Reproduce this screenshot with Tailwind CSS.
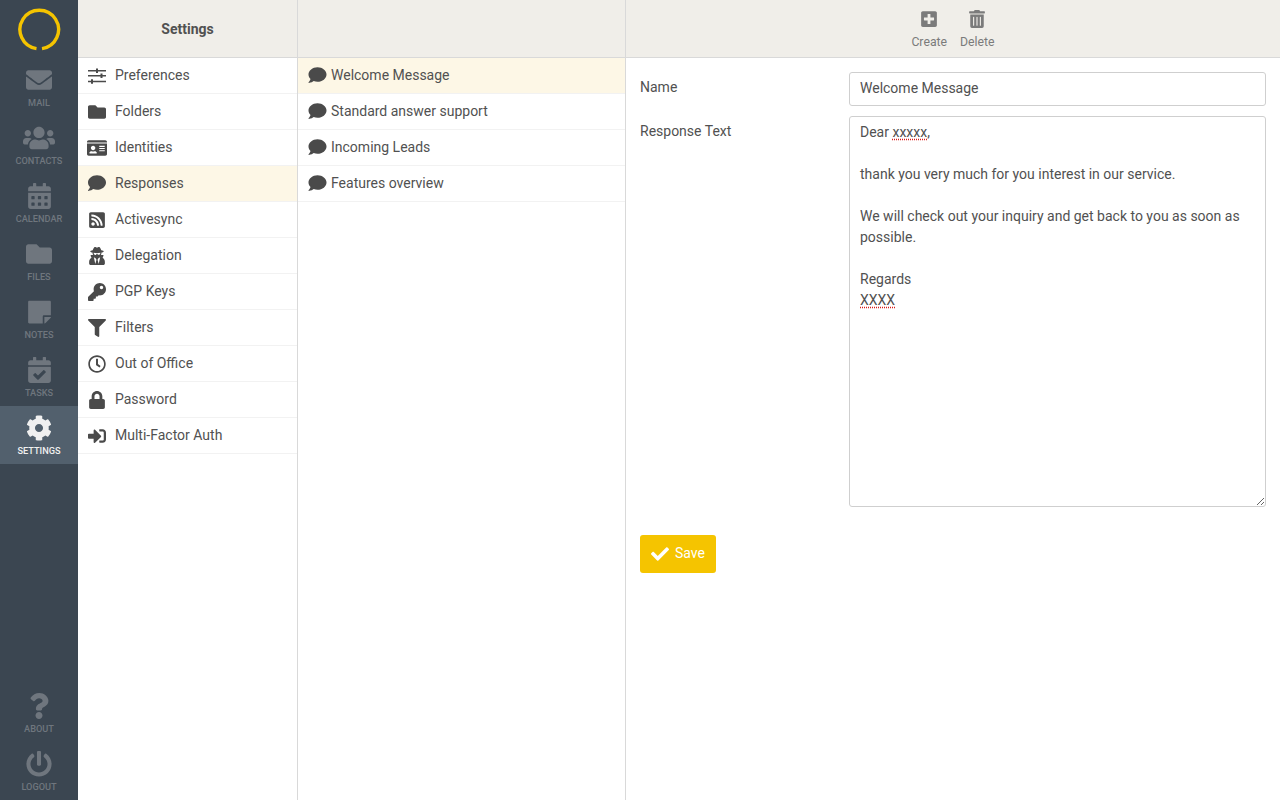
<!DOCTYPE html>
<html lang="en">
<head>
<meta charset="utf-8">
<title>Settings</title>
<script src="https://cdn.jsdelivr.net/npm/@tailwindcss/browser@4"></script>
</head>
<body class="m-0 overflow-hidden bg-white font-['Roboto',sans-serif] text-[14px] text-[#515151]">
<div class="flex h-[800px] w-[1280px]">

  <nav class="flex h-full w-[78px] shrink-0 flex-col bg-[#3b4651] text-[9.2px] font-medium uppercase text-[#6f767e]">
    <div class="flex h-[58px] items-start justify-center pt-[8px]">
      <svg class="h-[44px] w-[44px]" viewBox="0 0 44 44" fill="none"><path d="M19.5 40.6A19.3 19.3 0 1 1 25 40.6" stroke="#f5c400" stroke-width="3.4"/></svg>
    </div>
    <a class="flex h-[58px] flex-col items-center pt-[9px]"><svg class="h-[26px] w-[26px] fill-current" viewBox="0 0 512 512"><path d="M502.3 190.8c3.9-3.1 9.7-.2 9.7 4.7V400c0 26.5-21.5 48-48 48H48c-26.5 0-48-21.5-48-48V195.6c0-5 5.7-7.8 9.7-4.7 22.4 17.4 52.1 39.5 154.1 113.6 21.1 15.4 56.7 47.8 92.2 47.6 35.7.3 72-32.8 92.3-47.6 102-74.1 131.6-96.3 154-113.7zM256 320c23.2.4 56.6-29.2 73.4-41.4 132.7-96.3 142.8-104.7 173.4-128.7 5.8-4.5 9.2-11.5 9.2-18.9v-19c0-26.5-21.5-48-48-48H48C21.5 64 0 85.5 0 112v19c0 7.4 3.4 14.3 9.2 18.9 30.6 23.9 40.7 32.4 173.4 128.7 16.8 12.2 50.2 41.8 73.4 41.4z"/></svg><span class="mt-[4px] leading-[12px]">Mail</span></a>
    <a class="flex h-[58px] flex-col items-center pt-[9px]"><svg class="h-[26px] w-[32px] fill-current" viewBox="0 0 640 512"><path d="M96 224c35.3 0 64-28.7 64-64s-28.7-64-64-64-64 28.7-64 64 28.7 64 64 64zm448 0c35.3 0 64-28.7 64-64s-28.7-64-64-64-64 28.7-64 64 28.7 64 64 64zm32 32h-64c-17.6 0-33.5 7.1-45.1 18.6 40.3 22.1 68.9 62 75.1 109.4h66c17.7 0 32-14.3 32-32v-32c0-35.3-28.7-64-64-64zm-256 0c61.9 0 112-50.1 112-112S381.9 32 320 32 208 82.1 208 144s50.1 112 112 112zm76.8 32h-8.3c-20.8 10-43.9 16-68.5 16s-47.6-6-68.5-16h-8.3C179.6 288 128 339.6 128 403.2V432c0 26.5 21.5 48 48 48h288c26.5 0 48-21.5 48-48v-28.8c0-63.6-51.6-115.2-115.2-115.2zm-223.7-13.4C161.5 263.1 145.6 256 128 256H64c-35.3 0-64 28.7-64 64v32c0 17.7 14.3 32 32 32h65.9c6.3-47.4 34.9-87.3 75.2-109.4z"/></svg><span class="mt-[4px] leading-[12px]">Contacts</span></a>
    <a class="flex h-[58px] flex-col items-center pt-[9px]"><svg class="h-[26px] w-[23px] fill-current" viewBox="0 0 448 512"><path d="M0 464c0 26.5 21.5 48 48 48h352c26.5 0 48-21.5 48-48V192H0v272zm320-196c0-6.6 5.4-12 12-12h40c6.6 0 12 5.4 12 12v40c0 6.6-5.4 12-12 12h-40c-6.6 0-12-5.4-12-12v-40zm0 128c0-6.6 5.4-12 12-12h40c6.6 0 12 5.4 12 12v40c0 6.6-5.4 12-12 12h-40c-6.6 0-12-5.4-12-12v-40zM192 268c0-6.6 5.4-12 12-12h40c6.6 0 12 5.4 12 12v40c0 6.6-5.4 12-12 12h-40c-6.6 0-12-5.4-12-12v-40zm0 128c0-6.6 5.4-12 12-12h40c6.6 0 12 5.4 12 12v40c0 6.6-5.4 12-12 12h-40c-6.6 0-12-5.4-12-12v-40zM64 268c0-6.6 5.4-12 12-12h40c6.6 0 12 5.4 12 12v40c0 6.6-5.4 12-12 12H76c-6.6 0-12-5.4-12-12v-40zm0 128c0-6.6 5.4-12 12-12h40c6.6 0 12 5.4 12 12v40c0 6.6-5.4 12-12 12H76c-6.6 0-12-5.4-12-12v-40zM400 64h-48V16c0-8.8-7.2-16-16-16h-32c-8.8 0-16 7.2-16 16v48H160V16c0-8.8-7.2-16-16-16h-32c-8.8 0-16 7.2-16 16v48H48C21.5 64 0 85.5 0 112v48h448v-48c0-26.5-21.5-48-48-48z"/></svg><span class="mt-[4px] leading-[12px]">Calendar</span></a>
    <a class="flex h-[58px] flex-col items-center pt-[9px]"><svg class="h-[26px] w-[26px] fill-current" viewBox="0 0 512 512"><path d="M464 128H272l-54.63-54.63c-6-6-14.14-9.37-22.63-9.37H48C21.49 64 0 85.49 0 112v288c0 26.51 21.49 48 48 48h416c26.51 0 48-21.49 48-48V176c0-26.51-21.49-48-48-48z"/></svg><span class="mt-[4px] leading-[12px]">Files</span></a>
    <a class="flex h-[58px] flex-col items-center pt-[9px]"><svg class="h-[26px] w-[23px] fill-current" viewBox="0 0 448 512"><path d="M312 320h136V56c0-13.3-10.7-24-24-24H24C10.7 32 0 42.7 0 56v400c0 13.3 10.7 24 24 24h264V344c0-13.2 10.8-24 24-24zm129 55l-98 98c-4.5 4.5-10.6 7-17 7h-6V352h128v6.1c0 6.3-2.5 12.4-7 16.9z"/></svg><span class="mt-[4px] leading-[12px]">Notes</span></a>
    <a class="flex h-[58px] flex-col items-center pt-[9px]"><svg class="h-[26px] w-[23px] fill-current" viewBox="0 0 448 512"><path d="M436 160H12c-6.6 0-12-5.4-12-12v-36c0-26.5 21.5-48 48-48h48V12c0-6.6 5.4-12 12-12h40c6.6 0 12 5.4 12 12v52h128V12c0-6.6 5.4-12 12-12h40c6.6 0 12 5.4 12 12v52h48c26.5 0 48 21.5 48 48v36c0 6.6-5.4 12-12 12zM12 192h424c6.6 0 12 5.4 12 12v260c0 26.5-21.5 48-48 48H48c-26.5 0-48-21.5-48-48V204c0-6.6 5.4-12 12-12zm333.3 95.9l-28.2-28.4c-4.7-4.7-12.3-4.7-17-.1L194.2 364.6l-45.8-46.2c-4.7-4.7-12.3-4.7-17-.1l-28.4 28.2c-4.7 4.7-4.7 12.3-.1 17l82.6 83.3c4.7 4.7 12.3 4.7 17 .1l142.7-141.5c4.7-4.7 4.7-12.3.1-17z"/></svg><span class="mt-[4px] leading-[12px]">Tasks</span></a>
    <a class="flex h-[58px] flex-col items-center bg-[#52606d] pt-[9px] text-[#f0f0f0]"><svg class="h-[26px] w-[26px] fill-current" viewBox="0 0 512 512"><path d="M487.4 315.7l-42.6-24.6c4.3-23.2 4.3-47 0-70.2l42.6-24.6c4.9-2.8 7.1-8.6 5.5-14-11.1-35.6-30-67.8-54.7-94.6-3.8-4.1-10-5.1-14.8-2.3L380.8 110c-17.9-15.4-38.5-27.3-60.8-35.1V25.8c0-5.6-3.9-10.5-9.4-11.7-36.7-8.2-74.3-7.8-109.2 0-5.5 1.2-9.4 6.1-9.4 11.7V75c-22.2 7.9-42.8 19.8-60.8 35.1L88.7 85.5c-4.9-2.8-11-1.9-14.8 2.3-24.7 26.7-43.6 58.9-54.7 94.6-1.7 5.4.6 11.2 5.5 14L67.3 221c-4.3 23.2-4.3 47 0 70.2l-42.6 24.6c-4.9 2.8-7.1 8.6-5.5 14 11.1 35.6 30 67.8 54.7 94.6 3.8 4.1 10 5.1 14.8 2.3l42.6-24.6c17.9 15.4 38.5 27.3 60.8 35.1v49.2c0 5.6 3.9 10.5 9.4 11.7 36.7 8.2 74.3 7.8 109.2 0 5.5-1.2 9.4-6.1 9.4-11.7v-49.2c22.2-7.9 42.8-19.8 60.8-35.1l42.6 24.6c4.9 2.8 11 1.9 14.8-2.3 24.7-26.7 43.6-58.9 54.7-94.6 1.5-5.5-.7-11.3-5.6-14.1zM256 336c-44.1 0-80-35.9-80-80s35.9-80 80-80 80 35.9 80 80-35.9 80-80 80z"/></svg><span class="mt-[4px] leading-[12px]">Settings</span></a>
    <a class="mt-auto flex h-[58px] flex-col items-center pt-[9px]"><svg class="h-[26px] w-[20px] fill-current" viewBox="0 0 384 512"><path d="M202.021 0C122.202 0 70.503 32.703 29.914 91.026c-7.363 10.58-5.093 25.086 5.178 32.874l43.138 32.709c10.373 7.865 25.132 6.026 33.253-4.148 25.049-31.381 43.63-49.449 82.757-49.449 30.764 0 68.816 19.799 68.816 49.631 0 22.552-18.617 34.134-48.993 51.164-35.423 19.86-82.299 44.576-82.299 106.405V320c0 13.255 10.745 24 24 24h72.471c13.255 0 24-10.745 24-24v-5.773c0-42.86 125.268-44.645 125.268-160.627C377.504 66.256 286.902 0 202.021 0zM192 373.459c-38.196 0-69.271 31.075-69.271 69.271 0 38.195 31.075 69.27 69.271 69.27s69.271-31.075 69.271-69.271-31.075-69.27-69.271-69.27z"/></svg><span class="mt-[4px] leading-[12px]">About</span></a>
    <a class="flex h-[58px] flex-col items-center pt-[9px]"><svg class="h-[26px] w-[26px] fill-current" viewBox="0 0 512 512"><path d="M400 54.1c63 45 104 118.6 104 201.9 0 136.8-110.8 247.7-247.5 248C120 504.3 8.2 393 8 256.4 7.9 173.1 48.9 99.3 111.8 54.2c11.7-8.3 28-4.8 35 7.7L162.6 90c5.9 10.5 3.1 23.8-6.6 31-41.5 30.8-68 79.6-68 134.9-.1 92.3 74.5 168.1 168 168.1 91.6 0 168.6-74.2 168-169.1-.3-51.8-24.7-101.8-68.1-134-9.7-7.2-12.4-20.5-6.5-30.9l15.8-28.1c7-12.4 23.2-16.1 34.8-7.8zM296 264V24c0-13.3-10.7-24-24-24h-32c-13.3 0-24 10.7-24 24v240c0 13.3 10.7 24 24 24h32c13.3 0 24-10.7 24-24z"/></svg><span class="mt-[4px] leading-[12px]">Logout</span></a>
  </nav>

  <section class="flex h-full w-[220px] shrink-0 flex-col border-r border-[#d9d9d9]">
    <header class="flex h-[58px] shrink-0 items-center justify-center border-b border-[#d9d9d9] bg-[#f0eee9] pt-[1px] font-bold">Settings</header>
    <ul>
      <li class="flex h-[36px] items-center gap-[9px] border-b border-[#f2f2f2] pl-[10px]"><svg class="h-[18px] w-[18px] shrink-0 fill-current text-[#4a4a4a]" viewBox="0 0 18 18"><path d="M0 3h8V1.400h2V3h8v1.400h-8V6H8V4.400H0zM0 8.100h12.500V6.500h2v1.600H18v1.400h-3.500v1.600h-2V9.500H0zM0 13.800h3v-1.600h2v1.600h13v1.400H5v1.600H3v-1.600H0z"/></svg><span>Preferences</span></li>
      <li class="flex h-[36px] items-center gap-[9px] border-b border-[#f2f2f2] pl-[10px]"><svg class="h-[18px] w-[18px] shrink-0 fill-current text-[#4a4a4a]" viewBox="0 0 512 512"><path d="M464 128H272l-54.63-54.63c-6-6-14.14-9.37-22.63-9.37H48C21.49 64 0 85.49 0 112v288c0 26.51 21.49 48 48 48h416c26.51 0 48-21.49 48-48V176c0-26.51-21.49-48-48-48z"/></svg><span>Folders</span></li>
      <li class="flex h-[36px] items-center gap-[8px] border-b border-[#f2f2f2] pl-[9px]"><svg class="h-[20px] w-[20px] shrink-0 fill-current text-[#4a4a4a]" viewBox="0 0 576 512"><path d="M528 32H48C21.5 32 0 53.5 0 80v16h576V80c0-26.5-21.5-48-48-48zM0 432c0 26.5 21.5 48 48 48h480c26.5 0 48-21.5 48-48V128H0v304zm352-232c0-4.400 3.600-8 8-8h144c4.400 0 8 3.600 8 8v16c0 4.400-3.600 8-8 8H360c-4.400 0-8-3.600-8-8v-16zm0 64c0-4.400 3.600-8 8-8h144c4.400 0 8 3.600 8 8v16c0 4.400-3.600 8-8 8H360c-4.400 0-8-3.600-8-8v-16zm0 64c0-4.400 3.600-8 8-8h144c4.400 0 8 3.600 8 8v16c0 4.400-3.600 8-8 8H360c-4.400 0-8-3.600-8-8v-16zM176 192c35.300 0 64 28.700 64 64s-28.700 64-64 64-64-28.700-64-64 28.700-64 64-64zM67.100 396.200C75.500 370.500 99.600 352 128 352h8.200c12.300 5.100 25.700 8 39.800 8s27.600-2.900 39.800-8h8.200c28.400 0 52.500 18.500 60.900 44.200 3.200 9.900-5.200 19.800-15.600 19.800H82.700c-10.400 0-18.800-10-15.600-19.800z"/></svg><span>Identities</span></li>
      <li class="flex h-[36px] items-center gap-[9px] border-b border-[#f2f2f2] bg-[#fdf7e6] pl-[10px]"><svg class="mt-[-1px] h-[18px] w-[18px] shrink-0 fill-current text-[#4a4a4a]" viewBox="0 0 512 512"><path d="M256 32C114.600 32 0 125.100 0 240c0 49.600 21.400 95 57 130.700C44.500 421.100 2.700 466 2.200 466.500c-2.200 2.300-2.800 5.700-1.500 8.700S4.800 480 8 480c66.300 0 116-31.800 140.600-51.400 32.700 12.300 69 19.400 107.400 19.400 141.400 0 256-93.100 256-208S397.400 32 256 32z"/></svg><span>Responses</span></li>
      <li class="flex h-[36px] items-center gap-[9px] border-b border-[#f2f2f2] pl-[10px]"><svg class="h-[18px] w-[18px] shrink-0 fill-current text-[#4a4a4a]" viewBox="0 0 448 512"><path d="M400 32H48C21.490 32 0 53.490 0 80v352c0 26.510 21.490 48 48 48h352c26.510 0 48-21.490 48-48V80c0-26.510-21.490-48-48-48zM112 416c-26.510 0-48-21.490-48-48s21.490-48 48-48 48 21.490 48 48-21.490 48-48 48zm157.533 0h-34.335c-6.011 0-11.051-4.636-11.442-10.634-5.214-80.050-69.243-143.920-149.123-149.123-5.997-.39-10.633-5.431-10.633-11.441v-34.335c0-6.535 5.468-11.777 11.994-11.425 110.546 5.974 198.997 94.536 204.964 204.964.352 6.526-4.890 11.994-11.425 11.994zm103.027 0h-34.334c-6.161 0-11.175-4.882-11.427-11.038-5.598-136.535-115.204-246.161-251.760-251.760C68.882 152.949 64 147.935 64 141.774V107.440c0-6.454 5.338-11.664 11.787-11.432 167.830 6.025 302.210 141.191 308.205 308.205.232 6.449-4.978 11.787-11.432 11.787z"/></svg><span>Activesync</span></li>
      <li class="flex h-[36px] items-center gap-[9px] border-b border-[#f2f2f2] pl-[10px]"><svg class="h-[18px] w-[18px] shrink-0 fill-current text-[#4a4a4a]" viewBox="0 0 448 512"><path d="M383.900 308.300l23.900-62.600c4-10.500-3.700-21.700-15-21.700h-58.500c11-18.900 17.800-40.600 17.800-64v-.3c39.200-7.800 64-19.100 64-31.700 0-13.300-27.300-25.100-70.100-33-9.200-32.800-27-65.800-40.600-82.800-9.500-11.900-25.900-15.600-39.500-8.800l-27.600 13.800c-9 4.500-19.600 4.500-28.600 0L182.100 3.400c-13.600-6.800-30-3.100-39.500 8.800-13.500 17-31.400 50-40.600 82.800-42.700 7.900-70 19.700-70 33 0 12.600 24.800 23.900 64 31.700v.3c0 23.400 6.800 45.100 17.800 64H56.300c-11.500 0-19.200 11.700-14.700 22.300l25.800 60.200C27.300 329.800 0 372.700 0 422.400v44.800C0 491.900 20.100 512 44.800 512h358.400c24.700 0 44.800-20.100 44.800-44.800v-44.800c0-48.400-25.800-90.400-64.100-114.100zM176 480l-41.600-192 49.600 32 24 40-32 120zm96 0l-32-120 24-40 49.600-32L272 480zm41.700-298.500c-3.900 11.900-7 24.600-16.500 33.400-10.100 9.300-48 22.400-64-25-2.800-8.400-15.400-8.400-18.300 0-17 50.200-56 32.400-64 25-9.500-8.800-12.700-21.500-16.500-33.400-.8-2.500-6.300-5.700-6.300-5.800v-10.800c28.300 3.600 61 5.800 96 5.800s67.700-2.100 96-5.800v10.800c-.1.1-5.600 3.200-6.400 5.800z"/></svg><span>Delegation</span></li>
      <li class="flex h-[36px] items-center gap-[9px] border-b border-[#f2f2f2] pl-[10px]"><svg class="h-[18px] w-[18px] shrink-0 fill-current text-[#4a4a4a]" viewBox="0 0 512 512"><path d="M512 176.001C512 273.203 433.202 352 336 352c-11.220 0-22.190-1.062-32.827-3.069l-24.012 27.014A23.999 23.999 0 0 1 261.223 384H224v40c0 13.255-10.745 24-24 24h-40v40c0 13.255-10.745 24-24 24H24c-13.255 0-24-10.745-24-24v-78.059c0-6.365 2.529-12.470 7.029-16.971l161.802-161.802C163.108 213.814 160 195.271 160 176 160 78.798 238.797.001 335.999 0 433.488-.001 512 78.511 512 176.001zM336 128c0 26.510 21.490 48 48 48s48-21.490 48-48-21.490-48-48-48-48 21.490-48 48z"/></svg><span>PGP Keys</span></li>
      <li class="flex h-[36px] items-center gap-[9px] border-b border-[#f2f2f2] pl-[10px]"><svg class="h-[18px] w-[18px] shrink-0 fill-current text-[#4a4a4a]" viewBox="0 0 512 512"><path d="M487.976 0H24.028C2.710 0-8.047 25.866 7.058 40.971L192 225.941V432c0 7.831 3.821 15.170 10.237 19.662l80 55.980C298.020 518.690 320 507.493 320 487.980V225.941l184.947-184.970C520.021 25.896 509.338 0 487.976 0z"/></svg><span>Filters</span></li>
      <li class="flex h-[36px] items-center gap-[9px] border-b border-[#f2f2f2] pl-[10px]"><svg class="h-[18px] w-[18px] shrink-0 fill-current text-[#4a4a4a]" viewBox="0 0 512 512"><path d="M256 8C119 8 8 119 8 256s111 248 248 248 248-111 248-248S393 8 256 8zm0 448c-110.500 0-200-89.500-200-200S145.500 56 256 56s200 89.500 200 200-89.500 200-200 200zm61.800-104.400l-84.900-61.700c-3.100-2.300-4.900-5.900-4.900-9.700V116c0-6.600 5.400-12 12-12h32c6.600 0 12 5.400 12 12v141.700l66.800 48.600c5.400 3.900 6.500 11.400 2.600 16.800L334.600 349c-3.900 5.300-11.400 6.500-16.800 2.600z"/></svg><span>Out of Office</span></li>
      <li class="flex h-[36px] items-center gap-[9px] border-b border-[#f2f2f2] pl-[10px]"><svg class="h-[18px] w-[18px] shrink-0 fill-current text-[#4a4a4a]" viewBox="0 0 448 512"><path d="M400 224h-24v-72C376 68.200 307.800 0 224 0S72 68.200 72 152v72H48c-26.500 0-48 21.500-48 48v192c0 26.500 21.500 48 48 48h352c26.500 0 48-21.500 48-48V272c0-26.500-21.500-48-48-48zm-104 0H152v-72c0-39.700 32.300-72 72-72s72 32.300 72 72v72z"/></svg><span>Password</span></li>
      <li class="flex h-[36px] items-center gap-[9px] border-b border-[#f2f2f2] pl-[10px]"><svg class="h-[18px] w-[18px] shrink-0 fill-current text-[#4a4a4a]" viewBox="0 0 512 512"><path d="M416 448h-84c-6.600 0-12-5.400-12-12v-40c0-6.600 5.400-12 12-12h84c17.700 0 32-14.300 32-32V160c0-17.700-14.300-32-32-32h-84c-6.600 0-12-5.400-12-12V76c0-6.600 5.400-12 12-12h84c53 0 96 43 96 96v192c0 53-43 96-96 96zm-47-201L201 79c-15-15-41-4.500-41 17v96H24c-13.300 0-24 10.700-24 24v96c0 13.300 10.700 24 24 24h136v96c0 21.500 26 32 41 17l168-168c9.300-9.400 9.300-24.600 0-34z"/></svg><span>Multi-Factor Auth</span></li>
    </ul>
  </section>

  <section class="flex h-full w-[328px] shrink-0 flex-col border-r border-[#d9d9d9]">
    <header class="h-[58px] shrink-0 border-b border-[#d9d9d9] bg-[#f0eee9]"></header>
    <ul>
      <li class="flex h-[36px] items-center gap-[4px] border-b border-[#f2f2f2] bg-[#fdf7e6] pl-[10px]"><svg class="mt-[-1px] h-[18px] w-[19px] shrink-0 fill-current text-[#4a4a4a]" viewBox="0 0 512 512"><path d="M256 32C114.600 32 0 125.100 0 240c0 49.600 21.400 95 57 130.700C44.500 421.100 2.700 466 2.200 466.500c-2.200 2.300-2.800 5.700-1.500 8.700S4.800 480 8 480c66.300 0 116-31.800 140.600-51.400 32.700 12.300 69 19.400 107.400 19.400 141.400 0 256-93.100 256-208S397.400 32 256 32z"/></svg><span>Welcome Message</span></li>
      <li class="flex h-[36px] items-center gap-[4px] border-b border-[#f2f2f2] pl-[10px]"><svg class="mt-[-1px] h-[18px] w-[19px] shrink-0 fill-current text-[#4a4a4a]" viewBox="0 0 512 512"><path d="M256 32C114.600 32 0 125.100 0 240c0 49.600 21.400 95 57 130.700C44.500 421.100 2.700 466 2.200 466.500c-2.200 2.300-2.800 5.700-1.500 8.700S4.800 480 8 480c66.300 0 116-31.800 140.600-51.400 32.700 12.300 69 19.400 107.400 19.400 141.400 0 256-93.100 256-208S397.400 32 256 32z"/></svg><span>Standard answer support</span></li>
      <li class="flex h-[36px] items-center gap-[4px] border-b border-[#f2f2f2] pl-[10px]"><svg class="mt-[-1px] h-[18px] w-[19px] shrink-0 fill-current text-[#4a4a4a]" viewBox="0 0 512 512"><path d="M256 32C114.600 32 0 125.100 0 240c0 49.600 21.400 95 57 130.700C44.500 421.100 2.700 466 2.200 466.500c-2.200 2.300-2.800 5.700-1.500 8.700S4.800 480 8 480c66.300 0 116-31.800 140.600-51.400 32.700 12.300 69 19.400 107.400 19.400 141.400 0 256-93.100 256-208S397.400 32 256 32z"/></svg><span>Incoming Leads</span></li>
      <li class="flex h-[36px] items-center gap-[4px] border-b border-[#f2f2f2] pl-[10px]"><svg class="mt-[-1px] h-[18px] w-[19px] shrink-0 fill-current text-[#4a4a4a]" viewBox="0 0 512 512"><path d="M256 32C114.600 32 0 125.100 0 240c0 49.600 21.400 95 57 130.700C44.500 421.100 2.700 466 2.200 466.500c-2.200 2.300-2.800 5.700-1.500 8.700S4.800 480 8 480c66.300 0 116-31.800 140.600-51.400 32.700 12.300 69 19.400 107.400 19.400 141.400 0 256-93.100 256-208S397.400 32 256 32z"/></svg><span>Features overview</span></li>
    </ul>
  </section>

  <main class="flex h-full min-w-0 flex-1 flex-col">
    <header class="flex h-[58px] shrink-0 items-start justify-center gap-[13px] border-b border-[#d9d9d9] bg-[#f0eee9] pt-[10px] text-[12.25px] text-[#7b7b7b]">
      <button class="flex flex-col items-center"><svg class="h-[18px] w-[16px] fill-current" viewBox="0 0 448 512"><path d="M400 32H48C21.500 32 0 53.500 0 80v352c0 26.500 21.500 48 48 48h352c26.500 0 48-21.500 48-48V80c0-26.500-21.500-48-48-48zm-32 252c0 6.600-5.400 12-12 12h-92v92c0 6.600-5.400 12-12 12h-56c-6.600 0-12-5.400-12-12v-92H92c-6.600 0-12-5.400-12-12v-56c0-6.600 5.400-12 12-12h92v-92c0-6.600 5.400-12 12-12h56c6.600 0 12 5.400 12 12v92h92c6.600 0 12 5.400 12 12v56z"/></svg><span class="mt-[7px] leading-[14px]">Create</span></button>
      <button class="flex flex-col items-center"><svg class="h-[18px] w-[16px] fill-current" viewBox="0 0 448 512"><path d="M32 464a48 48 0 0 0 48 48h288a48 48 0 0 0 48-48V128H32zm272-256a16 16 0 0 1 32 0v224a16 16 0 0 1-32 0zm-96 0a16 16 0 0 1 32 0v224a16 16 0 0 1-32 0zm-96 0a16 16 0 0 1 32 0v224a16 16 0 0 1-32 0zM432 32H312l-9.400-18.700A24 24 0 0 0 281.100 0H166.800a23.720 23.720 0 0 0-21.400 13.300L136 32H16A16 16 0 0 0 0 48v32a16 16 0 0 0 16 16h416a16 16 0 0 0 16-16V48a16 16 0 0 0-16-16z"/></svg><span class="mt-[7px] leading-[14px]">Delete</span></button>
    </header>
    <form class="px-[14px] pt-[14px]">
      <div class="flex items-start">
        <label class="w-[209px] shrink-0 pt-[5px] leading-[20px]">Name</label>
        <div class="flex h-[34px] flex-1 items-center rounded-[3px] border border-[#cfcfcf] px-[10px] pb-[2px]">Welcome Message</div>
      </div>
      <div class="mt-[10px] flex items-start">
        <label class="w-[209px] shrink-0 pt-[5px] leading-[20px]">Response Text</label>
        <div class="h-[391px] flex-1 resize overflow-auto rounded-[3px] border border-[#cfcfcf] px-[10px] py-[5px] leading-[21px]">
          <p>Dear <span class="underline decoration-[#d9201c] decoration-dotted underline-offset-2">xxxxx</span>,</p>
          <p class="mt-[21px]">thank you very much for you interest in our service.</p>
          <p class="mt-[21px]">We will check out your inquiry and get back to you as soon as possible.</p>
          <p class="mt-[21px]">Regards</p>
          <p><span class="underline decoration-[#d9201c] decoration-dotted underline-offset-2">XXXX</span></p>
        </div>
      </div>
      <button type="button" class="mt-[28px] flex h-[38px] w-[76px] items-center justify-center gap-[6px] rounded-[3px] bg-[#f5c400] text-white"><svg class="h-[18px] w-[18px] fill-current" viewBox="0 0 512 512"><path d="M173.898 439.404l-166.400-166.400c-9.997-9.997-9.997-26.206 0-36.204l36.203-36.204c9.997-9.998 26.207-9.998 36.204 0L192 312.690 432.095 72.596c9.997-9.997 26.207-9.997 36.204 0l36.203 36.204c9.997 9.997 9.997 26.206 0 36.204l-294.400 294.401c-9.998 9.997-26.207 9.997-36.204-.001z"/></svg><span class="mt-[-2px]">Save</span></button>
    </form>
  </main>
</div>
</body>
</html>
